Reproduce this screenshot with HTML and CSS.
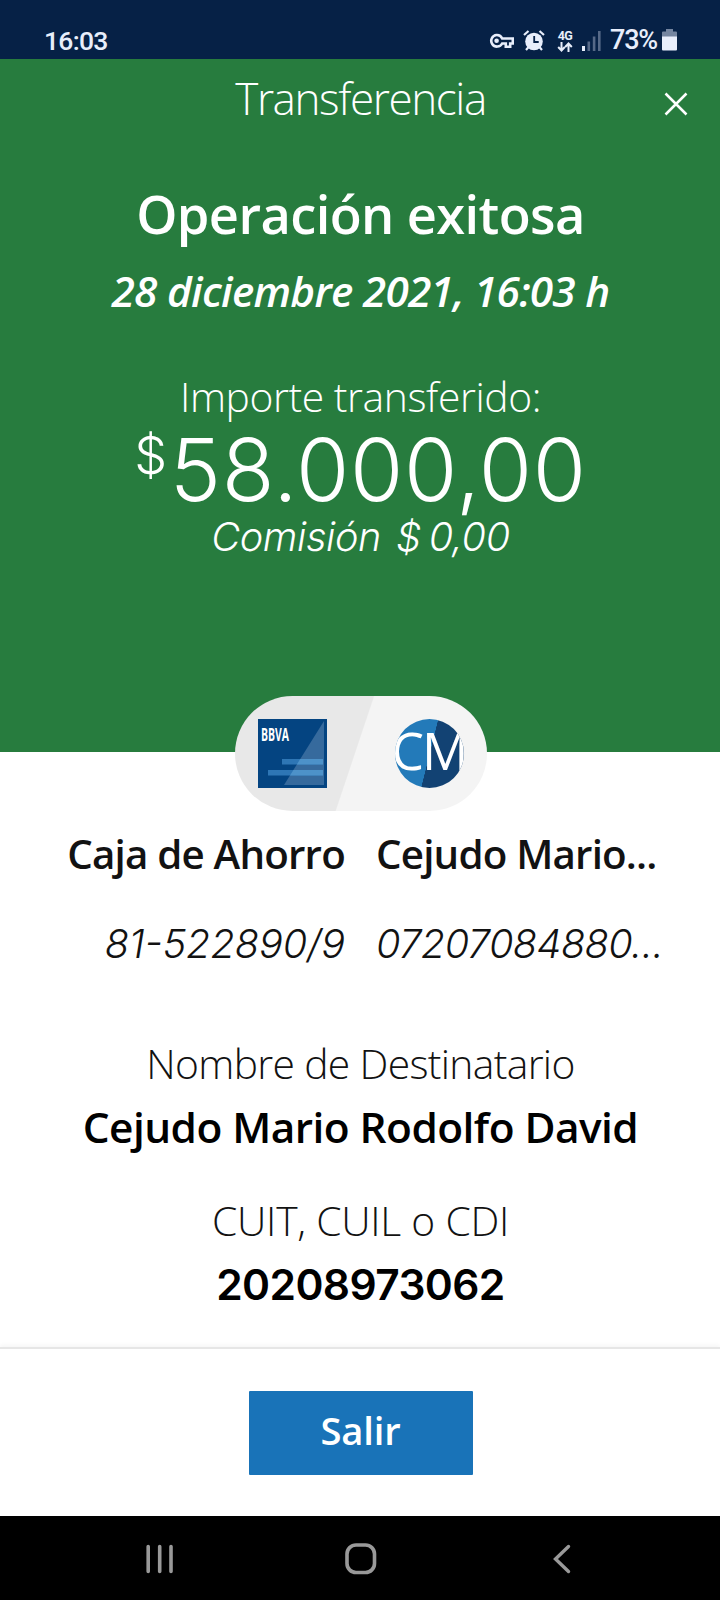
FILE: index.html
```
<!DOCTYPE html>
<html lang="es">
<head>
<meta charset="utf-8">
<title>Transferencia</title>
<link rel="stylesheet" href="styles.css">
</head>
<body>
<div class="status">
  <span class="clock">16:03</span>
  <div class="status-icons">
    <svg class="st-key" viewBox="0 0 25 16" width="25" height="16"><path d="M7.600 2a5.800 5.800 0 1 0 5.600 8.500h3.600v3.300h4.400v-3.300h2.600V5.500H13.200A5.800 5.800 0 0 0 7.600 2z" fill="none" stroke="#e8eefb" stroke-width="2.600"/><circle cx="7.600" cy="7.800" r="2.300" fill="#e8eefb"/></svg>
    <svg class="st-alarm" viewBox="0 0 22 22" width="22" height="22"><g fill="none" stroke="#e8eefb" stroke-width="2.2"><path d="M1 5 5.500 1M21 5 16.500 1M3 20l3-3.500M19 20l-3-3.500"/></g><circle cx="11" cy="11.500" r="8.800" fill="#e8eefb"/><path d="M11.200 6v6h4.500" fill="none" stroke="#062146" stroke-width="1.800"/></svg>
    <span class="net"><span class="net-label">4G</span><svg viewBox="0 0 16 10" width="16" height="10"><path d="M4.500 0v8M1.200 5l3.300 3.500L7.800 5M11.500 10V2M8.200 5l3.300-3.500L14.800 5" fill="none" stroke="#e8eefb" stroke-width="2"/></svg></span>
    <svg class="st-signal" viewBox="0 0 19 20" width="19" height="20"><path fill="#e8eefb" d="M0 15h3v5H0z"/><path fill="#566987" d="M5.500 10.500h2.600V20H5.500zM10.800 5.500h2.600V20h-2.600zM16 0h2.600v20H16z"/></svg>
    <span class="percent">73%</span>
    <svg class="st-battery" viewBox="0 0 15 22" width="15" height="22"><path fill="#7485a0" d="M4 0h7v2.500h3q1 0 1 1V8H0V3.500q0-1 1-1h3z"/><path fill="#e8eefb" d="M0 7.500h15V20.500q0 1-1 1H1q-1 0-1-1z"/></svg>
  </div>
</div>

<header class="hero">
  <div class="titlebar">
    <h1 class="title">Transferencia</h1>
    <svg class="close" viewBox="0 0 24 24" width="24" height="24"><path d="M1.500 1.500l21 21M22.500 1.500l-21 21" stroke="#fff" stroke-width="2.500" fill="none"/></svg>
  </div>
  <h2 class="result">Operación exitosa</h2>
  <p class="date">28 diciembre 2021, 16:03 h</p>
  <p class="amount-label">Importe transferido:</p>
  <p class="amount"><span class="currency">$</span><span>58.000,00</span></p>
  <p class="fee"><span>Comisión</span><span class="fee-currency">$</span><span>0,00</span></p>
</header>

<main class="details">
  <div class="pill">
    <svg class="card" viewBox="0 0 69 69" width="69" height="69"><path fill="#044481" d="M0 0h69v69H0z"/><path fill="#366a9d" d="M66 2v64H26z"/><path fill="#2e76b5" d="M24 40h41v5.500H24zM10 51h55v5.500H10z"/><path fill="#4d92c9" d="M42.200 40H65v5.500H38.800zM35.400 51H65v5.500H32z"/><text class="brand" x="3" y="22" textLength="28" lengthAdjust="spacingAndGlyphs">BBVA</text></svg>
    <div class="avatar"><span>CM</span></div>
  </div>
  <div class="accounts">
    <div class="account from"><p class="account-name">Caja de Ahorro</p><p class="account-number">81-522890/9</p></div>
    <div class="account"><p class="account-name">Cejudo Mario...</p><p class="account-number long">07207084880...</p></div>
  </div>
  <p class="label recipient">Nombre de Destinatario</p>
  <p class="value">Cejudo Mario Rodolfo David</p>
  <p class="label tax">CUIT, CUIL o CDI</p>
  <p class="value id">20208973062</p>
</main>

<footer class="actions"><button class="exit" type="button">Salir</button></footer>

<nav class="nav">
  <svg viewBox="0 0 32 32" width="32" height="32"><path d="M4.200 3.500v25M15.700 3.500v25M27 3.500v25" stroke="#999" stroke-width="3.600" stroke-linecap="round"/></svg>
  <svg viewBox="0 0 32 32" width="32" height="32"><rect x="2" y="2" width="27.500" height="27.500" rx="9" fill="none" stroke="#999" stroke-width="3.600"/></svg>
  <svg viewBox="0 0 32 32" width="32" height="32"><path d="M23.500 3.500 10.500 16l13 12.500" fill="none" stroke="#999" stroke-width="3.400" stroke-linecap="round"/></svg>
</nav>
</body>
</html>
```
FILE: styles.css
```
* { box-sizing: border-box; }
body { margin: 0; width: 720px; height: 1600px; overflow: hidden; display: flex; flex-direction: column; background: #fff; color: #121212; font-family: "Open Sans", "Noto Sans", sans-serif; }
h1, h2, p { margin: 0; white-space: nowrap; }

.status { height: 59px; background: #062146; color: #e8eefb; font-family: Roboto, sans-serif; font-weight: 500; display: flex; justify-content: space-between; padding: 23px 43px 0 44px; }
.clock { font-size: 26.5px; line-height: 35px; letter-spacing: -.7px; }
.status-icons { display: flex; align-items: flex-start; }
.st-key { margin: 10px 9px 0 0; }
.st-alarm { margin: 7px 11px 0 0; }
.net { display: flex; flex-direction: column; align-items: center; width: 18px; margin: 6px 8px 0 0; }
.net-label { font-size: 12.5px; line-height: 13px; height: 13px; font-weight: 700; letter-spacing: -.5px; }
.st-signal { margin: 8px 9px 0 0; }
.percent { font-size: 27px; line-height: 35px; letter-spacing: -1.2px; width: 50px; margin-right: 2px; }
.st-battery { margin-top: 6px; }

.hero { height: 693px; padding-left: 1px; background: #277c3e; color: #fff; display: flex; flex-direction: column; align-items: center; }
.titlebar { width: 100%; height: 76px; display: grid; grid-template-columns: 1fr auto 1fr; align-items: center; }
.title { grid-column: 2; font-size: 44px; font-weight: 300; letter-spacing: -1.4px; line-height: 76px; padding-top: 1px; }
.close { justify-self: end; margin: 13px 32px 0 0; }
.result { margin-top: 49px; font-size: 52.4px; line-height: 60px; font-weight: 600; letter-spacing: -.6px; }
.date { margin-top: 22px; font-size: 42.3px; line-height: 50px; font-weight: 600; font-style: italic; letter-spacing: -.72px; }
.amount-label { margin-top: 56px; font-size: 40.8px; line-height: 48px; font-weight: 320; letter-spacing: -.4px; }
.amount { margin-top: 12px; display: flex; font-family: Inter, sans-serif; font-weight: 300; font-size: 86.3px; line-height: 76px; letter-spacing: .7px; }
.currency { font-size: 52px; line-height: 48px; margin-right: 2px; }
.fee { margin-top: 5px; display: flex; font-family: Inter, sans-serif; font-weight: 280; font-style: italic; font-size: 39.7px; line-height: 48px; letter-spacing: -.4px; }
.fee-currency { margin: 0 8px 0 15px; }

.details { height: 595px; padding-left: 1px; display: flex; flex-direction: column; align-items: center; }
.pill { flex: none; margin-top: -56px; width: 252px; height: 115px; border-radius: 58px; background: linear-gradient(108.5deg, #e8e8e8 0 47.700%, #f4f4f4 48.100%); display: flex; justify-content: space-between; align-items: center; padding: 0 23px; }
.brand { font: 700 18px "Open Sans", sans-serif; fill: #fff; }
.avatar { width: 69px; height: 69px; border-radius: 50%; overflow: hidden; background: linear-gradient(104deg, #237ab9 0 50%, #124273 50.500%); color: #fff; display: flex; justify-content: center; font-size: 52px; line-height: 62px; font-weight: 400; letter-spacing: -2px; }
.accounts { margin-top: 18px; width: 100%; display: grid; grid-template-columns: 344px 1fr; column-gap: 31px; }
.from { text-align: right; }
.account-name { font-size: 40.3px; line-height: 50px; font-weight: 600; letter-spacing: -.8px; }
.account-number { margin-top: 40px; font-family: Inter, sans-serif; font-size: 39.7px; line-height: 50px; font-weight: 280; font-style: italic; }
.long { letter-spacing: -.55px; }
.label { font-size: 40.8px; line-height: 50px; font-weight: 320; }
.recipient { margin-top: 69px; letter-spacing: -.66px; }
.value { margin-top: 14px; font-size: 42.4px; line-height: 50px; font-weight: 600; letter-spacing: -.55px; color: #000; }
.tax { margin-top: 43px; letter-spacing: -.25px; }
.id { margin-top: 15px; font-family: Inter, sans-serif; font-size: 42.5px; letter-spacing: -.6px; }

.actions { height: 169px; border-top: 2px solid #e6e6e6; box-shadow: 0 -2px 4px rgba(0,0,0,.04); display: flex; justify-content: center; padding: 42px 0 0 1px; }
.exit { width: 224px; height: 84px; padding: 0 0 6px; border: 0; border-radius: 1px; background: #1973b8; color: #fff; font: 600 38.2px "Open Sans", sans-serif; letter-spacing: -.2px; }
.nav { height: 84px; background: #000; display: flex; justify-content: space-between; padding: 27px 143px 0 144px; }
```
